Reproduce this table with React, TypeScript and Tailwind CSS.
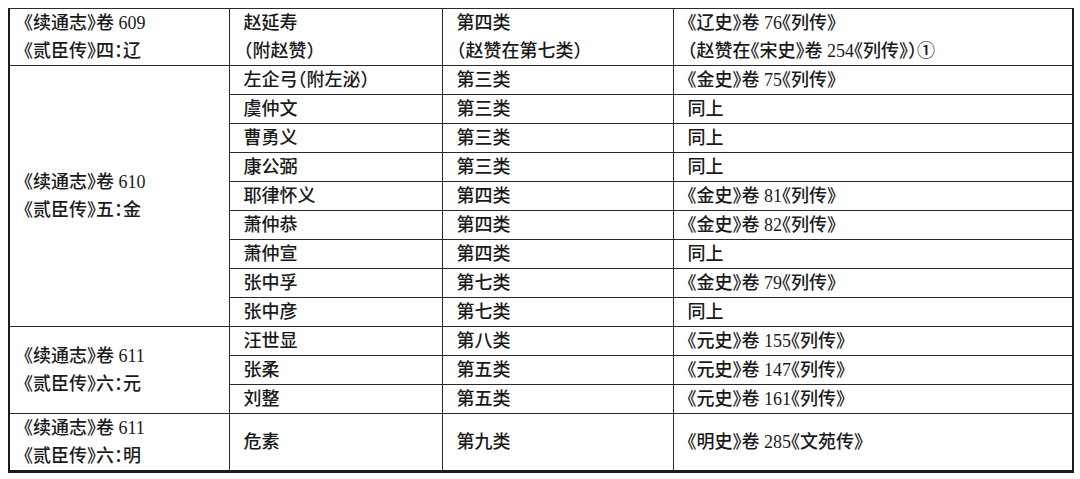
import React from 'react';

type Row = { name: string[]; cls: string[]; src: string[] };

const groups: { vol: [string, string]; rows: Row[] }[] = [
  {
    vol: ['《续通志》卷 609', '《贰臣传》四：辽'],
    rows: [
      {
        name: ['赵延寿', '（附赵赞）'],
        cls: ['第四类', '（赵赞在第七类）'],
        src: ['《辽史》卷 76《列传》', '（赵赞在《宋史》卷 254《列传》）①'],
      },
    ],
  },
  {
    vol: ['《续通志》卷 610', '《贰臣传》五：金'],
    rows: [
      { name: ['左企弓（附左泌）'], cls: ['第三类'], src: ['《金史》卷 75《列传》'] },
      { name: ['虞仲文'], cls: ['第三类'], src: ['同上'] },
      { name: ['曹勇义'], cls: ['第三类'], src: ['同上'] },
      { name: ['康公弼'], cls: ['第三类'], src: ['同上'] },
      { name: ['耶律怀义'], cls: ['第四类'], src: ['《金史》卷 81《列传》'] },
      { name: ['萧仲恭'], cls: ['第四类'], src: ['《金史》卷 82《列传》'] },
      { name: ['萧仲宣'], cls: ['第四类'], src: ['同上'] },
      { name: ['张中孚'], cls: ['第七类'], src: ['《金史》卷 79《列传》'] },
      { name: ['张中彦'], cls: ['第七类'], src: ['同上'] },
    ],
  },
  {
    vol: ['《续通志》卷 611', '《贰臣传》六：元'],
    rows: [
      { name: ['汪世显'], cls: ['第八类'], src: ['《元史》卷 155《列传》'] },
      { name: ['张柔'], cls: ['第五类'], src: ['《元史》卷 147《列传》'] },
      { name: ['刘整'], cls: ['第五类'], src: ['《元史》卷 161《列传》'] },
    ],
  },
  {
    vol: ['《续通志》卷 611', '《贰臣传》六：明'],
    rows: [{ name: ['危素'], cls: ['第九类'], src: ['《明史》卷 285《文苑传》'] }],
  },
];

const cell = 'border border-[#2a2a2a] px-[14px] align-middle leading-[28px] whitespace-nowrap';

function Lines({ items }: { items: string[] }) {
  return (
    <>
      {items.map((s, i) => (
        <div key={i}>{s}</div>
      ))}
    </>
  );
}

export default function App() {
  return (
    <div
      className="bg-white w-[1080px] h-[479px] pt-[8px] pl-[8px] text-[18px] text-[#1a1a1a] font-medium [font-feature-settings:'halt']"
      style={{ fontFamily: '"Liberation Serif", "Noto Sans CJK SC", serif' }}
    >
      <table className="border-collapse table-fixed w-[1064px] border-t border-l-2 border-r-2 border-b-[3px] border-[#1a1a1a]">
        <colgroup>
          <col className="w-[220px]" />
          <col className="w-[213px]" />
          <col className="w-[231px]" />
          <col className="w-[400px]" />
        </colgroup>
        <tbody>
          {groups.map((g, gi) =>
            g.rows.map((r, ri) => (
              <tr key={`${gi}-${ri}`} className="h-[28px]">
                {ri === 0 && (
                  <td rowSpan={g.rows.length} className={cell}>
                    <Lines items={g.vol} />
                  </td>
                )}
                <td className={cell}>
                  <Lines items={r.name} />
                </td>
                <td className={cell}>
                  <Lines items={r.cls} />
                </td>
                <td className={cell}>
                  <Lines items={r.src} />
                </td>
              </tr>
            ))
          )}
        </tbody>
      </table>
    </div>
  );
}
